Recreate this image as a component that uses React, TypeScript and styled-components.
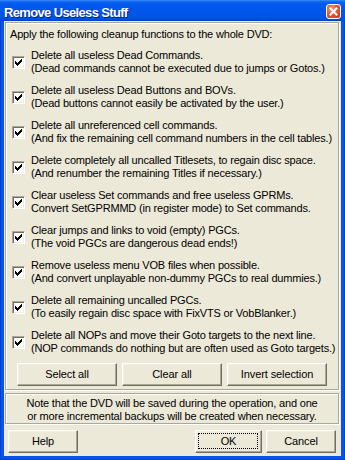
import React from 'react';
import styled, { createGlobalStyle } from 'styled-components';

const font = `"Liberation Sans", Arial, sans-serif`;

const Global = createGlobalStyle`
  html, body { margin: 0; padding: 0; background: #ffffff; }
  #root { width: 345px; height: 460px; }
  * { box-sizing: border-box; }
`;

const Window = styled.div`
  width: 345px;
  height: 460px;
  display: flex;
  flex-direction: column;
  background: #0655e8;
  box-shadow: inset 1px 0 #0a3fcc, inset -1px 0 #0a3fcc, inset 0 -1px #0a3fcc;
  padding: 0 4px 4px;
  font-family: ${font};
  font-size: 11px;
  color: #000;
`;

const TitleBar = styled.div`
  height: 21px;
  margin: 0 -4px;
  padding: 0 4px;
  display: flex;
  align-items: flex-start;
  justify-content: space-between;
  background: linear-gradient(
    to bottom,
    #3a8cf9 0px,
    #0a63f0 2px,
    #0058ee 5px,
    #0055e8 14px,
    #0050e0 19px,
    #003dcb 21px
  );
`;

const Title = styled.span`
  margin-top: 5px;
  font: bold 13px/15px ${font};
  letter-spacing: -0.65px;
  color: #fff;
  text-shadow: 1px 1px #0a1e8a;
  white-space: nowrap;
`;

const CloseButton = styled.div`
  width: 15px;
  height: 15px;
  margin-top: 4px;
  border: 1px solid #fff;
  border-radius: 3px;
  background: radial-gradient(circle at 35% 30%, #f29a7e 0%, #e25a34 45%, #c8380f 100%);
  display: flex;
  align-items: center;
  justify-content: center;
`;

const Client = styled.div`
  flex: 1;
  background: #ece9d8;
  display: flex;
  flex-direction: column;
  padding: 1px 2px 3px 1px;
`;

const Group = styled.div<{ $center?: boolean }>`
  border: 1px solid #aca899;
  box-shadow: inset 1px 1px #fff, 1px 1px #fff;
  display: flex;
  flex-direction: column;
  padding: ${(p) => (p.$center ? '3px 0 0' : '5px 4px 3px 4px')};
  margin-top: ${(p) => (p.$center ? '3px' : '0')};
  text-align: ${(p) => (p.$center ? 'center' : 'left')};
`;

const Text = styled.div`
  line-height: 13px;
  letter-spacing: -0.18px;
  white-space: nowrap;
`;

const Intro = styled(Text)`
  margin-bottom: 8px;
`;

const Options = styled.div`
  display: flex;
  flex-direction: column;
  gap: 9px;
`;

const Option = styled.label`
  display: flex;
  align-items: center;
  gap: 6px;
  padding-left: 2px;
`;

const CheckBox = styled.span`
  flex: none;
  width: 13px;
  height: 13px;
  border: 1px solid;
  border-color: #aca899 #fff #fff #aca899;
  box-shadow: inset 1px 1px #716f64, inset -1px -1px #f1efe2;
  background: #fff;
  display: block;
`;

const ButtonRow = styled.div`
  display: flex;
  justify-content: center;
  gap: 5px;
  margin-top: 8px;
`;

const Button = styled.div<{ $w?: number; $default?: boolean }>`
  position: relative;
  width: ${(p) => p.$w ?? 100}px;
  height: 23px;
  border: 1px solid;
  border-color: #fff #716f64 #716f64 #fff;
  box-shadow: inset -1px -1px #aca899, inset 1px 1px #f1efe2;
  background: #ece9d8;
  display: flex;
  align-items: center;
  justify-content: center;
  line-height: 13px;
  letter-spacing: -0.1px;
  &::after {
    content: '';
    display: ${(p) => (p.$default ? 'block' : 'none')};
    position: absolute;
    inset: 2px 3px 3px 2px;
    border: 1px dotted #000;
  }
`;

const Footer = styled.div`
  display: flex;
  margin-top: 6px;
  padding: 0 3px;
  gap: 4px;
`;

const Spacer = styled.div`
  flex: 1;
`;

const checkCols: [number, number][] = [
  [2, 4], [3, 5], [4, 6], [5, 5], [6, 4], [7, 3], [8, 2],
];

const Check = () => (
  <svg width="11" height="11" viewBox="0 0 11 11" shapeRendering="crispEdges" style={{ display: 'block' }}>
    {checkCols.map(([x, y]) => (
      <rect key={x} x={x} y={y} width="1" height="3" fill="#000" />
    ))}
  </svg>
);

const CloseIcon = () => (
  <svg width="9" height="9" viewBox="0 0 9 9" style={{ display: 'block' }}>
    <path d="M1.5 1.5 L7.5 7.5 M7.5 1.5 L1.5 7.5" stroke="#fff" strokeWidth="2" strokeLinecap="square" />
  </svg>
);

const options: [string, string][] = [
  ['Delete all useless Dead Commands.', '(Dead commands cannot be executed due to jumps or Gotos.)'],
  ['Delete all useless Dead Buttons and BOVs.', '(Dead buttons cannot easily be activated by the user.)'],
  ['Delete all unreferenced cell commands.', '(And fix the remaining cell command numbers in the cell tables.)'],
  ['Delete completely all uncalled Titlesets, to regain disc space.', '(And renumber the remaining Titles if necessary.)'],
  ['Clear useless Set commands and free useless GPRMs.', 'Convert SetGPRMMD (in register mode) to Set commands.'],
  ['Clear jumps and links to void (empty) PGCs.', '(The void PGCs are dangerous dead ends!)'],
  ['Remove useless menu VOB files when possible.', '(And convert unplayable non-dummy PGCs to real dummies.)'],
  ['Delete all remaining uncalled PGCs.', '(To easily regain disc space with FixVTS or VobBlanker.)'],
  ['Delete all NOPs and move their Goto targets to the next line.', '(NOP commands do nothing but are often used as Goto targets.)'],
];

export default function App() {
  return (
    <>
      <Global />
      <Window>
        <TitleBar>
          <Title>Remove Useless Stuff</Title>
          <CloseButton>
            <CloseIcon />
          </CloseButton>
        </TitleBar>
        <Client>
          <Group>
            <Intro>Apply the following cleanup functions to the whole DVD:</Intro>
            <Options>
              {options.map(([a, b]) => (
                <Option key={a}>
                  <CheckBox>
                    <Check />
                  </CheckBox>
                  <div>
                    <Text>{a}</Text>
                    <Text>{b}</Text>
                  </div>
                </Option>
              ))}
            </Options>
            <ButtonRow>
              <Button>Select all</Button>
              <Button>Clear all</Button>
              <Button>Invert selection</Button>
            </ButtonRow>
          </Group>
          <Group $center>
            <Text>Note that the DVD will be saved during the operation, and one</Text>
            <Text>or more incremental backups will be created when necessary.</Text>
          </Group>
          <Footer>
            <Button $w={70}>Help</Button>
            <Spacer />
            <Button $w={67} $default>OK</Button>
            <Button $w={70}>Cancel</Button>
          </Footer>
        </Client>
      </Window>
    </>
  );
}
